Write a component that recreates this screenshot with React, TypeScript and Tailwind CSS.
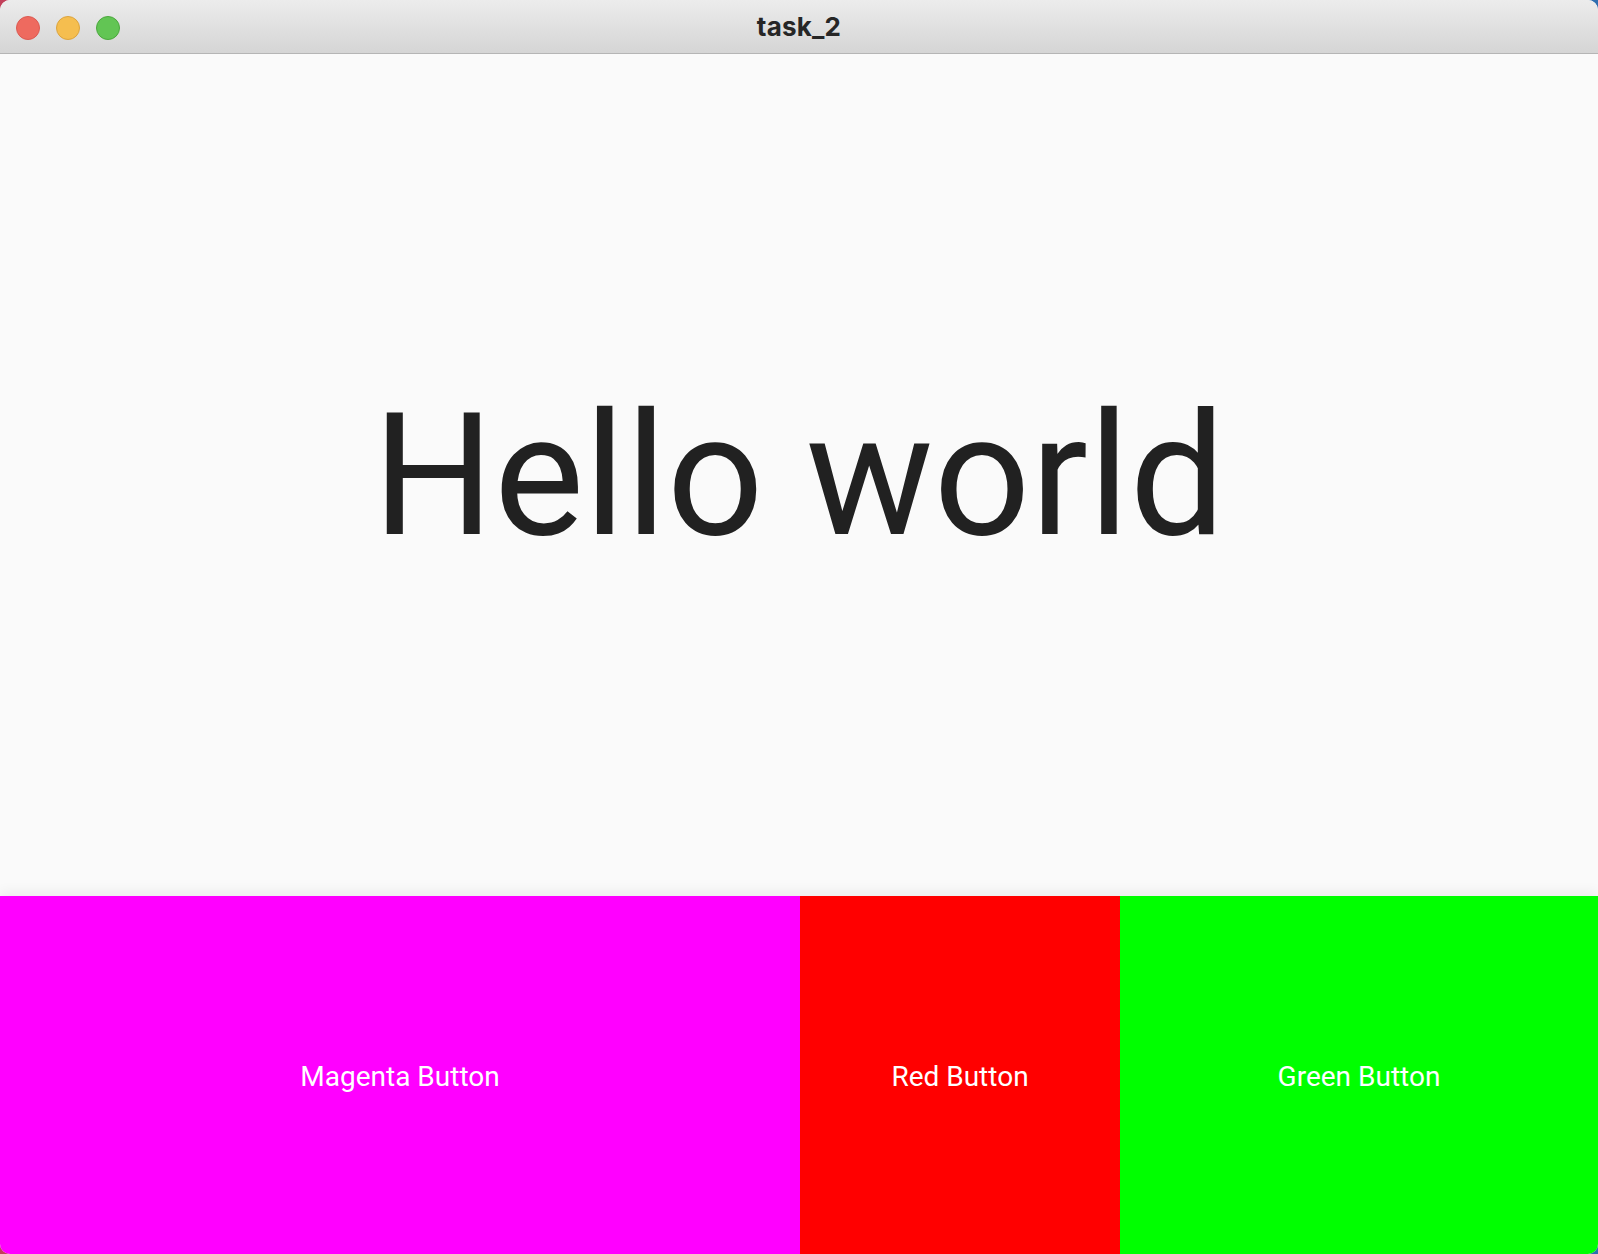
import React from 'react';

const buttons = [
  { label: 'Magenta Button', className: 'w-[800px] bg-[#ff00ff]' },
  { label: 'Red Button', className: 'w-[320px] bg-[#ff0000]' },
  { label: 'Green Button', className: 'flex-1 bg-[#00ff00]' },
];

export default function App() {
  return (
    <div className="h-[1254px] w-[1598px] bg-[linear-gradient(90deg,#c2405a_0%,#5a3a6a_50%,#2f6fb0_100%)] font-['Roboto',sans-serif]">
      <div className="flex h-full w-full flex-col overflow-hidden rounded-[10px] bg-[#fafafa]">
        {/* Title bar */}
        <div className="relative flex h-[54px] shrink-0 items-center justify-center border-b border-[#b5b5b5] bg-[linear-gradient(180deg,#ececec_0%,#d5d5d5_100%)]">
          <div className="absolute left-[16px] top-[16px] flex gap-[16px]">
            <div className="h-[24px] w-[24px] rounded-full border border-[#dc5a52] bg-[#ee6a5f]" />
            <div className="h-[24px] w-[24px] rounded-full border border-[#dca43e] bg-[#f5be4f]" />
            <div className="h-[24px] w-[24px] rounded-full border border-[#4ba83d] bg-[#62c554]" />
          </div>
          <span className="font-['Inter',sans-serif] text-[26px] font-bold tracking-[0.2px] text-[#262626]">task_2</span>
        </div>

        {/* Body */}
        <div className="flex flex-1 items-center justify-center">
          <span className="mt-[2px] text-[170px] leading-none text-[#212121]">Hello world</span>
        </div>

        {/* Buttons */}
        <div className="flex h-[358px] shrink-0 shadow-[0_-4px_12px_rgba(0,0,0,0.06)]">
          {buttons.map((b) => (
            <button key={b.label} className={`flex shrink-0 items-center justify-center pt-[4px] text-[28px] text-white ${b.className}`}>
              {b.label}
            </button>
          ))}
        </div>
      </div>
    </div>
  );
}
